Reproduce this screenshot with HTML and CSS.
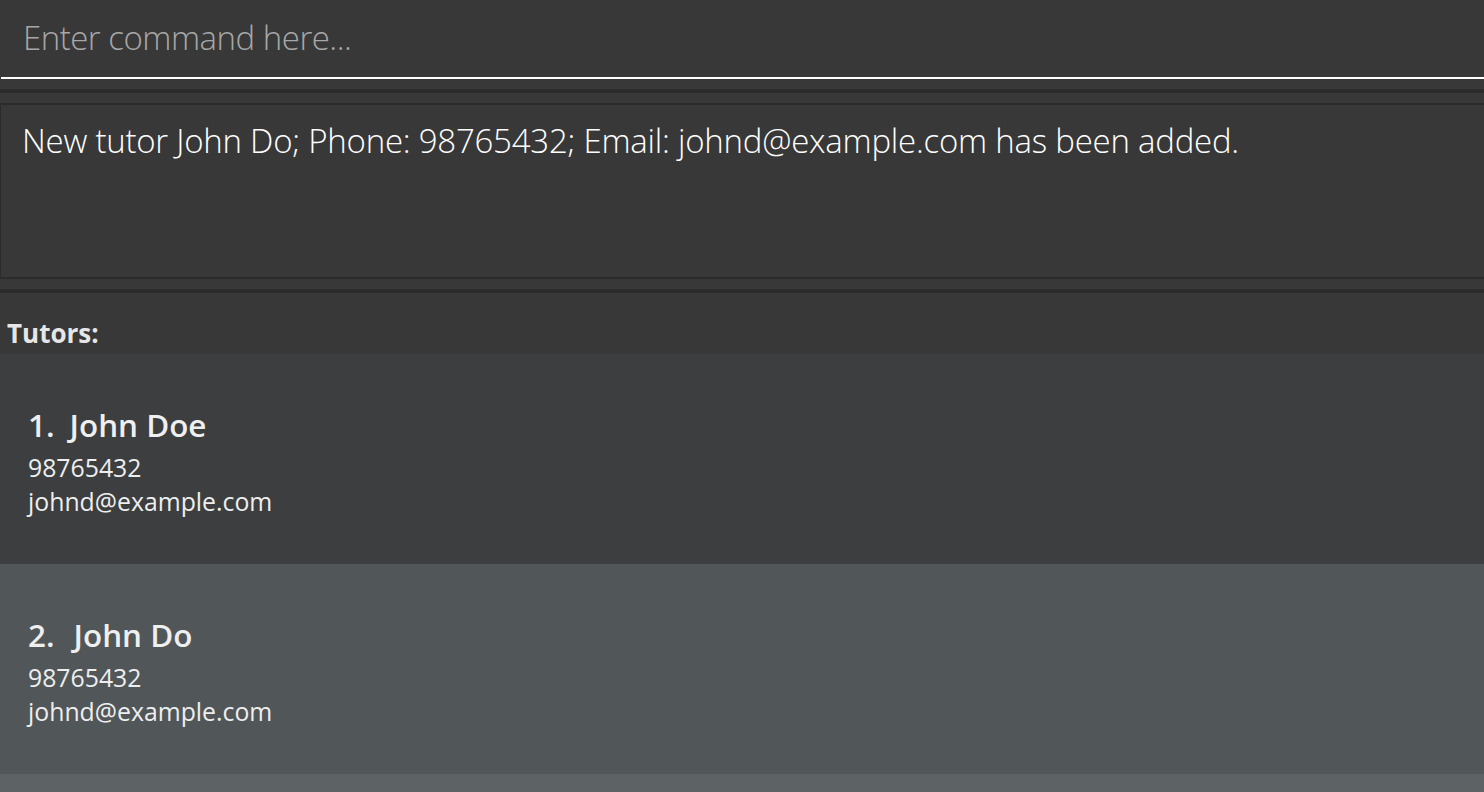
FILE: index.html
```html
<!DOCTYPE html>
<html lang="en">
<head>
<meta charset="utf-8">
<title>Tutors</title>
<link rel="stylesheet" href="styles.css">
</head>
<body>
<div class="app">
  <div class="command-pane">
    <input class="command-input" type="text" placeholder="Enter command here...">
  </div>
  <div class="pane-gap"></div>
  <div class="divider"></div>
  <div class="result-pane">
    <div class="result-box">New tutor John Do; Phone: 98765432; Email: johnd@example.com has been added.</div>
  </div>
  <div class="divider"></div>
  <div class="list-pane">
    <div class="list-title">Tutors:</div>
    <div class="list">
      <div class="cell cell-even">
        <div class="name-row"><span class="cell-id">1.</span><span class="cell-name">John Doe</span></div>
        <div class="cell-field">98765432</div>
        <div class="cell-field">johnd@example.com</div>
      </div>
      <div class="cell cell-odd">
        <div class="name-row"><span class="cell-id cell-id-wide">2.</span><span class="cell-name">John Do</span></div>
        <div class="cell-field">98765432</div>
        <div class="cell-field">johnd@example.com</div>
      </div>
      <div class="cell cell-empty"></div>
    </div>
  </div>
</div>
</body>
</html>
```

FILE: styles.css
```css
html, body {
  margin: 0;
  padding: 0;
  height: 100%;
  background: #383838;
  overflow: hidden;
}

.app {
  display: flex;
  flex-direction: column;
  height: 792px;
  font-family: "Open Sans", "Noto Sans", sans-serif;
}

.command-pane {
  height: 77px;
  border-bottom: 2px solid #ffffff;
  margin-left: 1px;
  background: #383838;
  display: flex;
}

.command-input {
  flex: 1;
  border: none;
  outline: none;
  background: transparent;
  margin: 0;
  padding: 21px 0 0 22px;
  height: 33px;
  font-family: "Open Sans", "Noto Sans", sans-serif;
  font-weight: 300;
  font-size: 33px;
  line-height: 33px;
  letter-spacing: -0.5px;
  color: #ffffff;
}

.command-input::placeholder {
  color: #a7a7a7;
  opacity: 1;
}

.pane-gap {
  height: 10px;
}

.divider {
  height: 4px;
  background: #2b2b2b;
}

.result-pane {
  padding: 10px 0;
}

.result-box {
  height: 153px;
  border-top: 2px solid #2b2b2b;
  border-bottom: 2px solid #2b2b2b;
  border-left: 1px solid #2b2b2b;
  padding: 19px 0 0 21px;
  font-weight: 300;
  font-size: 33px;
  line-height: 33px;
  letter-spacing: -0.24px;
  color: #ffffff;
}

.list-pane {
  flex: 1;
  display: flex;
  flex-direction: column;
}

.list-title {
  height: 34px;
  padding: 27px 0 0 7px;
  font-weight: 700;
  font-size: 26px;
  line-height: 27px;
  color: #e6e6e6;
}

.list {
  flex: 1;
  display: flex;
  flex-direction: column;
}

.cell {
  height: 157px;
  padding: 53px 0 0 28px;
  flex: none;
}

.cell-even {
  background: #3c3e3f;
}

.cell-odd {
  background: #515658;
}

.cell-empty {
  flex: 1;
  height: auto;
  padding: 0;
  background: #5d6265;
}

.name-row {
  display: flex;
  align-items: baseline;
  gap: 15px;
  height: 36px;
  margin-bottom: 7px;
  font-weight: 600;
  font-size: 31.4px;
  line-height: 36px;
  color: #efefef;
}

.cell-id-wide {
  margin-right: 4px;
}

.cell-field {
  font-size: 24.8px;
  line-height: 34px;
  color: #eeeeee;
}
```
